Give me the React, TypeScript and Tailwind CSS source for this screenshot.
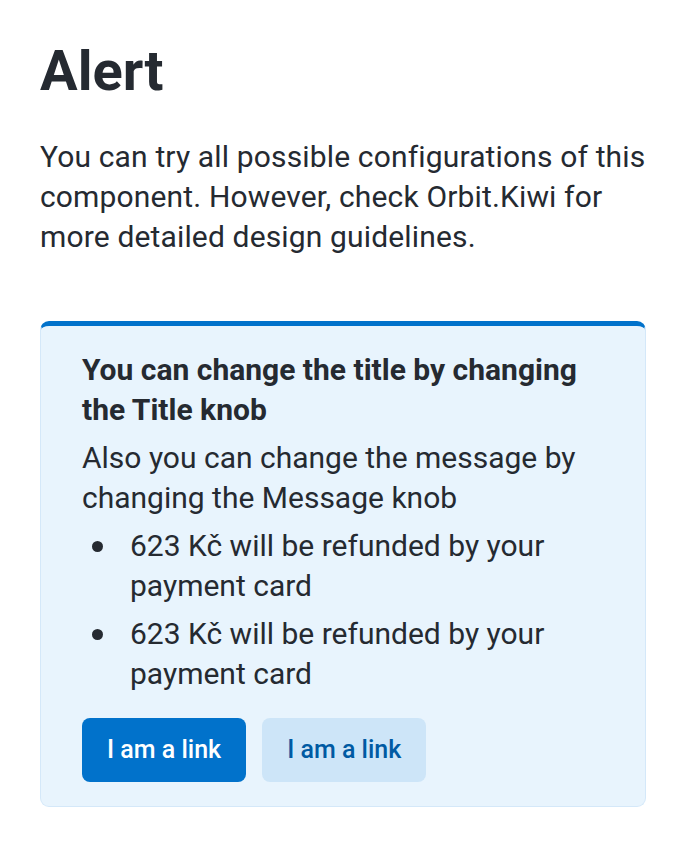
export default function App() {
  const items = [
    '623 Kč will be refunded by your payment card',
    '623 Kč will be refunded by your payment card',
  ];

  return (
    <div className="min-h-screen bg-white px-10 pt-[36px] text-[#252a31]" style={{ fontFamily: 'Roboto, "Liberation Sans", sans-serif' }}>
      <h1 className="text-[56px] font-bold leading-[70px]">Alert</h1>
      <p className="mt-[31px] text-[30px] leading-[40px] tracking-[0.15px]">
        You can try all possible configurations of this component. However, check Orbit.Kiwi for more detailed design guidelines.
      </p>

      <div className="mt-[64px] w-[606px] rounded-[9px] border border-[#d4e8f9] border-t-[5px] border-t-[#0172cb] bg-[#e8f4fd] pl-[41px] pr-[30px] pt-[24px] pb-[24px]">
        <div className="text-[30px] font-bold leading-[40px]">
          You can change the title by changing the Title knob
        </div>
        <div className="mt-[8px] text-[30px] leading-[40px]">
          Also you can change the message by changing the Message knob
        </div>
        <ul className="mt-[8px] flex flex-col gap-[8px] pl-[48px] text-[30px] leading-[40px]">
          {items.map((text, i) => (
            <li key={i} className="relative">
              <span className="absolute left-[-38px] top-[15px] h-[11px] w-[11px] rounded-full bg-[#252a31]" />
              {text}
            </li>
          ))}
        </ul>
        <div className="mt-[24px] flex gap-4">
          <button type="button" className="h-[64px] rounded-lg bg-[#0172cb] px-[25px] text-[25px] font-medium text-white">
            I am a link
          </button>
          <button type="button" className="h-[64px] rounded-lg bg-[#cde5f8] px-[25px] text-[25px] font-medium text-[#005aa3]">
            I am a link
          </button>
        </div>
      </div>
    </div>
  );
}
